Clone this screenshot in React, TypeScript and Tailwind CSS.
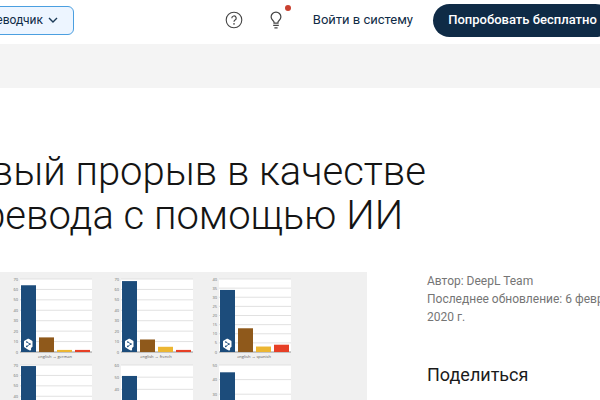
type Chart = {
  x: number;
  y: number;
  max: number;
  step: number;
  bars: number[];
  label?: string;
};

const BAR_COLORS = ["#1c4c7b", "#8f591b", "#ecb632", "#e63f26"];
const PLOT_HEIGHT = 73;

const charts: Chart[] = [
  { x: 79, y: 7, max: 70, step: 10, bars: [64, 14, 2, 2], label: "english → german" },
  { x: 180, y: 7, max: 70, step: 10, bars: [68, 12, 5, 2], label: "english → french" },
  { x: 278, y: 7, max: 40, step: 5, bars: [34, 13, 3, 4], label: "english → spanish" },
  { x: 79, y: 93, max: 70, step: 10, bars: [69, 11, 4, 3] },
  { x: 180, y: 93, max: 60, step: 10, bars: [51, 14, 6, 4] },
  { x: 278, y: 93, max: 50, step: 10, bars: [45, 12, 5, 3] },
];

const BarChart = ({ x, y, max, step, bars, label }: Chart) => {
  const ticks = Array.from({ length: max / step + 1 }, (_, i) => i * step);
  const scale = PLOT_HEIGHT / max;

  return (
    <g transform={`translate(${x} ${y})`}>
      <rect width="72" height={PLOT_HEIGHT} fill="#fff" />
      {ticks.map((tick) => (
        <g key={tick}>
          <path
            d={`M0 ${PLOT_HEIGHT - tick * scale}h72`}
            stroke={tick === 0 ? "#8a8a8a" : "#dedede"}
            strokeWidth="0.9"
          />
          <text
            x="-2"
            y={PLOT_HEIGHT - tick * scale + 1.5}
            fontSize="4"
            textAnchor="end"
            fill="#6c6c6c"
          >
            {tick}
          </text>
        </g>
      ))}
      {bars.map((value, i) => (
        <rect
          key={i}
          x={1 + i * 18}
          y={PLOT_HEIGHT - value * scale}
          width="15"
          height={value * scale}
          fill={BAR_COLORS[i]}
        />
      ))}
      {label && (
        <>
          {/* DeepL mark */}
          <path
            d="M8.3 60.6 11.6 62.6V67.4L10.2 68.6V70.6L7.8 69.4 4.9 67.6V62.6Z"
            fill="#fff"
            stroke="#fff"
            strokeWidth="1.8"
            strokeLinejoin="round"
          />
          <path
            d="M6.8 63 10 65.1 6.8 67.4"
            fill="none"
            stroke="#1c4c7b"
            strokeWidth="0.8"
          />
          <circle cx="6.8" cy="63" r=".8" fill="#1c4c7b" />
          <circle cx="10" cy="65.1" r=".8" fill="#1c4c7b" />
          <circle cx="6.8" cy="67.4" r=".8" fill="#1c4c7b" />
          <text x="35" y="79" fontSize="4" textAnchor="middle" fill="#555">
            {label}
          </text>
        </>
      )}
    </g>
  );
};

const Header = () => (
  <header className="flex h-11 items-center justify-between bg-white">
    <button
      type="button"
      className="-ml-10 mb-1 flex h-[29px] w-[114px] items-center justify-end gap-0.5 rounded-md border border-[#4b9fe0] bg-[#edf5ff] pr-3 text-xs text-[#0f2b46]"
    >
      Переводчик
      <svg width="16" height="16" viewBox="0 0 16 16" fill="none" stroke="#1b3a57" strokeWidth="1.4">
        <path d="M4 6l4 4 4-4" />
      </svg>
    </button>

    <div className="-mr-3 mb-1 flex items-center">
      <button type="button" aria-label="Помощь" className="mr-6">
        <svg width="18" height="18" viewBox="0 0 18 18" fill="none" stroke="#444" strokeWidth="1.1">
          <circle cx="9" cy="9" r="7.8" />
          <path d="M6.8 7.2a2.2 2.2 0 1 1 3.3 1.9c-.7.4-1.1.8-1.1 1.6" strokeWidth="1.2" />
          <circle cx="9" cy="12.9" r=".8" fill="#444" stroke="none" />
        </svg>
      </button>
      <button type="button" aria-label="Новинки" className="relative mr-7">
        <svg width="18" height="18" viewBox="0 0 18 18" fill="none" stroke="#444" strokeWidth="1.2">
          <path d="M7 12.2v-1.3c0-1-2.9-2-2.9-4.9a4.9 4.9 0 0 1 9.8 0c0 2.9-2.9 3.9-2.9 4.9v1.3z" />
          <path d="M6.2 14.4h5.6M7.4 16.8h3.2" />
        </svg>
        <span className="absolute -right-1.5 -top-1.5 size-1.5 rounded-full bg-[#c9402f]" />
      </button>
      <a href="#" className="mr-5 whitespace-nowrap text-[13px] text-[#0f2b46]">
        Войти в систему
      </a>
      <a
        href="#"
        className="flex h-[33px] w-[179px] items-center justify-center whitespace-nowrap rounded-full bg-[#0f2b46] text-[13px] font-medium text-white"
      >
        Попробовать бесплатно
      </a>
    </div>
  </header>
);

export default function App() {
  return (
    <div className="h-screen overflow-hidden bg-white font-['Roboto',sans-serif]">
      <Header />
      <div className="h-11 bg-[#f4f4f4]" />

      <main className="-ml-[60px] pt-[62px]">
        <h1 className="whitespace-nowrap text-[40px] font-light leading-[44px] text-[#141414]">
          Новый прорыв в качестве
          <br />
          перевода с помощью ИИ
        </h1>

        <div className="mt-[34px] flex gap-[60px]">
          <figure className="w-[427px] shrink-0 bg-[#f0f0f0]">
            <svg
              viewBox="-1 0 427 180"
              className="block w-full font-['Open_Sans',sans-serif]"
              role="img"
              aria-label="Качество перевода"
            >
              {charts.map((chart, i) => (
                <BarChart key={i} {...chart} />
              ))}
            </svg>
          </figure>

          <aside className="w-[210px] shrink-0">
            <p className="text-xs leading-[18px] text-[#757575]">
              Автор: DeepL Team
              <br />
              Последнее обновление: 6 февраля 2020 г.
            </p>
            <h2 className="mt-[37px] text-lg leading-6 text-[#1b1b1b]">Поделиться</h2>
          </aside>
        </div>
      </main>
    </div>
  );
}
